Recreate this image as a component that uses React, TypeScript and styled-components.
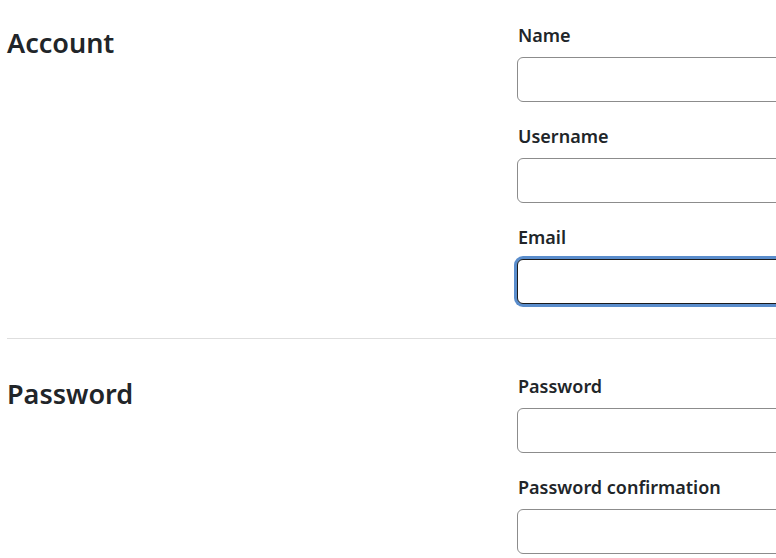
import React from "react";
import styled, { createGlobalStyle } from "styled-components";

const GlobalStyle = createGlobalStyle`
  html, body {
    margin: 0;
    padding: 0;
    background: #fff;
    overflow: hidden;
  }
  body {
    font-family: "Noto Sans", "Open Sans", sans-serif;
    color: #212529;
  }
`;

const Page = styled.div`
  padding: 21px 0 0 7px;
  width: 900px;
`;

const Section = styled.section`
  display: grid;
  grid-template-columns: 510px 1fr;
  padding-bottom: 34px;

  &:last-child {
    padding-bottom: 0;
  }
`;

const Divider = styled.hr`
  border: none;
  border-top: 1px solid #dedede;
  margin: 0 0 33px 0;
`;

const Heading = styled.h2`
  margin: 4px 0 0 0;
  font-size: 27px;
  font-weight: 600;
  line-height: 36px;
  color: #212529;
`;

const Fields = styled.div`
  display: flex;
  flex-direction: column;
  gap: 20px;
`;

const Field = styled.div`
  display: flex;
  flex-direction: column;
`;

const Label = styled.label`
  font-size: 18px;
  font-weight: 600;
  line-height: 28px;
  margin-bottom: 8px;
  padding-left: 1px;
  color: #212529;
`;

const Input = styled.input<{ $focused?: boolean }>`
  box-sizing: border-box;
  height: 45px;
  width: 380px;
  border: 1px solid ${(p) => (p.$focused ? "#1b1b1b" : "#8c8c8c")};
  border-radius: 6px;
  background: #fff;
  font: inherit;
  padding: 0 10px;
  outline: none;
  box-shadow: ${(p) => (p.$focused ? "0 0 0 3px #5a8dcc" : "none")};
`;

const App = () => {
  return (
    <>
      <GlobalStyle />
      <Page>
        <Section>
          <Heading>Account</Heading>
          <Fields>
            <Field>
              <Label>Name</Label>
              <Input type="text" />
            </Field>
            <Field>
              <Label>Username</Label>
              <Input type="text" />
            </Field>
            <Field>
              <Label>Email</Label>
              <Input type="email" $focused />
            </Field>
          </Fields>
        </Section>
        <Divider />
        <Section>
          <Heading>Password</Heading>
          <Fields>
            <Field>
              <Label>Password</Label>
              <Input type="password" />
            </Field>
            <Field>
              <Label>Password confirmation</Label>
              <Input type="password" />
            </Field>
          </Fields>
        </Section>
      </Page>
    </>
  );
};

export default App;
